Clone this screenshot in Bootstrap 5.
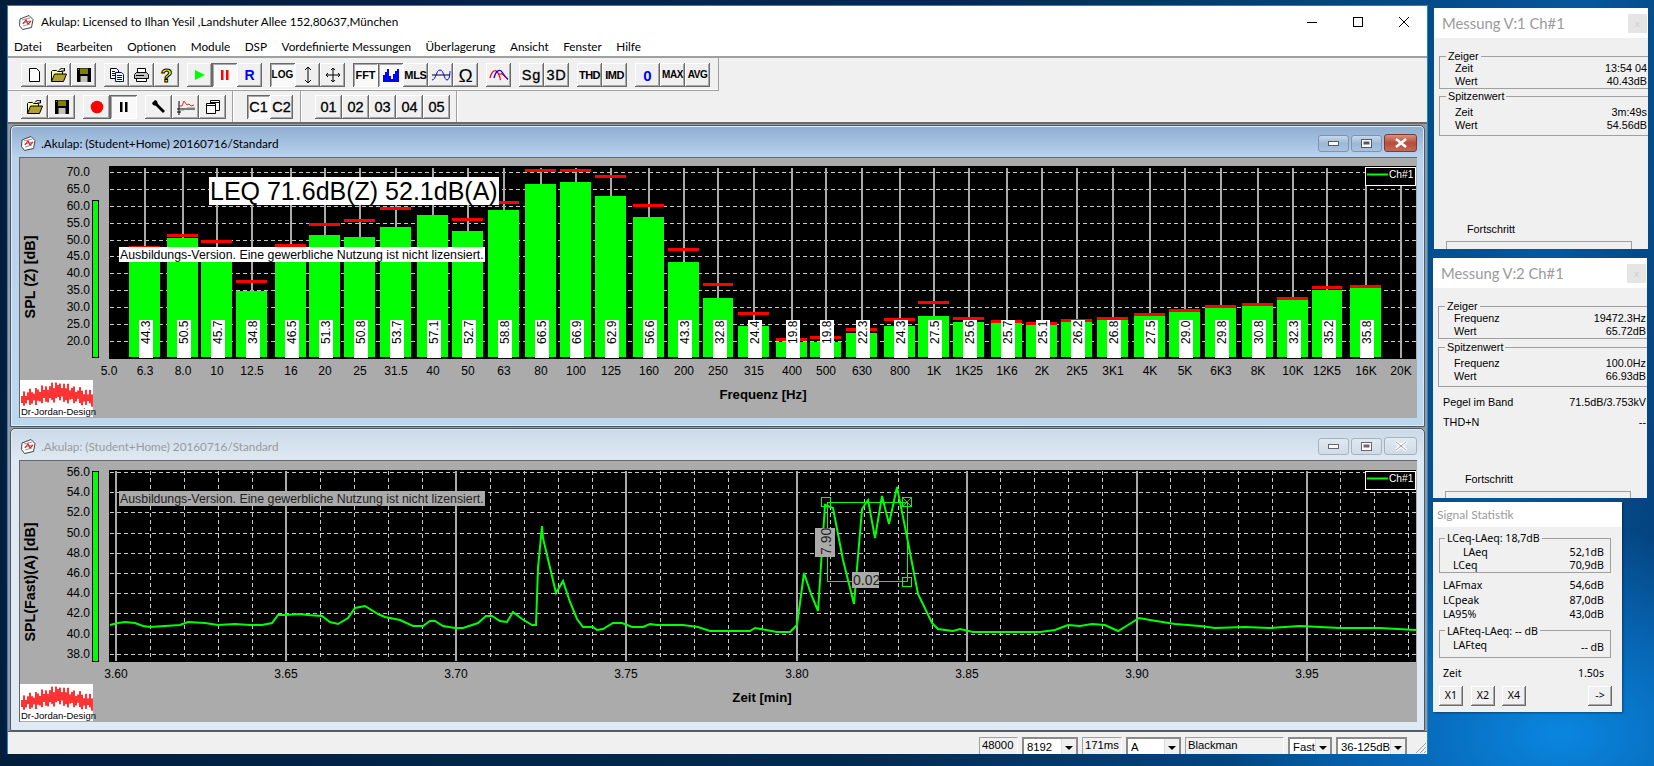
<!DOCTYPE html>
<html lang="de">
<head>
<meta charset="utf-8">
<title>Akulap</title>
<link href="https://cdn.jsdelivr.net/npm/bootstrap@5.3.0/dist/css/bootstrap.min.css" rel="stylesheet">
<style>
html,body{width:1654px;height:766px;overflow:hidden;margin:0}
body{font-family:"Liberation Sans",Arial,sans-serif;color:#000;background:radial-gradient(ellipse 330px 210px at 1560px 735px,#0a86df 0%,#0769b8 45%,rgba(5,80,150,0) 100%),linear-gradient(98deg,#011d3a 0%,#022a52 55%,#05579c 90%,#043f78 100%)}
.desk{width:1654px;height:766px}
.win-main{left:7px;top:5px;width:1421px;height:749px;background:#f0f0f0;border:1px solid #1a86cc;border-bottom:0}
.sys{font-family:"Lato","Noto Sans",sans-serif}
.titlebar{height:32px;background:#fff;padding-left:10px;font-size:11.75px}
.titlebar .ttl{margin-left:6px}
.wc{width:46px;height:32px;margin-top:0}
.menubar{height:18px;background:#fff;font-size:11.75px;line-height:18px;padding-left:6px;gap:14.5px}
.sep2{height:2px;background:#a0a0a0}
.tbrow1{height:33px;padding:5px 0 0 13px;gap:8px;position:relative}
.band1{width:711px;height:33px;margin:-5px 0 0 -13px;padding:5px 0 0 13px;border-right:1px solid #a0a0a0;border-bottom:1px solid #a0a0a0;box-shadow:inset 0 -1px #fff}
.tbrow2{height:31px}
.bnd{height:31px;padding-top:4px;border-right:1px solid #a0a0a0;box-shadow:1px 0 #fff}
.btn.tb{width:25px;height:24px;padding:0;border:0;border-radius:0;background:#f0f0f0;color:#000;flex:none;box-shadow:inset -1px -1px #6a6a6a,inset 1px 1px #fff,inset -2px -2px #a8a8a8;font-size:14px;line-height:1}
.btn.tb.on{background:#f9f9f9;box-shadow:inset 1px 1px #6a6a6a,inset -1px -1px #fff,inset 2px 2px #a8a8a8}
.tb2{width:27px!important}
.tbc{width:23px!important}
.mono{font-weight:700;font-size:10px!important;letter-spacing:.1px}
.pix{font-weight:700;font-size:11px!important}
.wide{font-size:14.5px!important;letter-spacing:.8px;-webkit-text-stroke:.3px #000}
.mdi{height:607px;padding:1px 2px 0 2px;background:#9a9a9a;gap:1px;border-top:2px solid #6a6a6a;box-sizing:content-box;margin-top:0}
.child{border:1px solid #4d5a68;border-radius:5px 5px 0 0;padding:0 7px 8px 8px;box-shadow:inset 0 0 0 1px #dce9f6}
.child.active{background:linear-gradient(#8fadd0 0,#b9d3ef 31px,#bcd7f0 100%)}
.child.idle{background:linear-gradient(#cbdae8 0,#dfe9f3 31px,#dfeaf5 100%)}
.ctitle{height:31px;font-size:11.75px;padding:3px 0 0 1px}
.ctitle>span{padding-top:2px}
.child.idle .ctitle span{color:#9a9a9a}
.cb{width:31px;height:17px;margin-left:2px;border:1px solid #7f93ab;border-radius:3px;background:linear-gradient(#c7d8ea,#9db8d6 50%,#a9c3df)}
.child.idle .cb{border-color:#a7b2bd;background:linear-gradient(#e1e9f1,#cfdbe7)}
.cb.x{width:33px;height:18px;background:linear-gradient(#d7907f,#b84c38 50%,#c26a58);border-color:#7d3a30}
.child.idle .cb.x{width:33px;background:linear-gradient(#e1e9f1,#cfdbe7);border-color:#a7b2bd}
.client{background:#ababab;display:block}
svg text{font-family:"Liberation Sans",Arial,sans-serif}
.statusbar{height:23px;border-top:1px solid #5c5c5c;padding:5px 20px 0 0;gap:4px;overflow:hidden;font-size:11.3px;position:relative}
.fld{height:17px;border:1px solid #a0a0a0;border-right-color:#fff;border-bottom:0;padding:1px 1px 0 2px;line-height:13px;flex:none;background:#f0f0f0}
.cmb{height:17px;flex:none;border:2px solid #8a8a8a;border-bottom:0;background:#fff;padding:2px 0 0 3px;position:relative;line-height:13px}
.cmb::after{content:"";position:absolute;right:0;top:0;width:15px;height:100%;background:#f0f0f0;border-left:1px solid #ddd}
.cmb::before{content:"";position:absolute;z-index:1;right:3px;top:7px;border:4px solid transparent;border-top:4px solid #000;border-bottom:0}
.sgrip{right:0;bottom:0}
.pan{background:#f0f0f0;overflow:hidden;font-size:10.8px;line-height:13px}
.pan1{left:1434px;top:8px;width:214px;height:241px}
.pan2{left:1433px;top:258px;width:214px;height:240px}
.pan3{left:1433px;top:502px;width:189px;height:210px;font-family:"Noto Sans",sans-serif;font-size:10.6px;box-shadow:1px 1px 2px rgba(0,0,0,.4)}
.ptitle{height:30px;background:#fff;color:#9a9a9a;font-size:14.8px;padding-left:8px;font-family:"Lato","Noto Sans",sans-serif}
.pan3 .ptitle{height:25px;padding-left:4px;font-size:12px}
.pclose{width:19px;height:19px;background:#e5e5e5;color:#cfcfcf;margin:0 1px 0 0;font-size:10px;line-height:19px;text-align:center}
.pbody{padding-left:5px;margin-right:-4px;height:calc(100% - 30px)}
.gb{border:1px solid #a0a0a0;margin:0;padding:0 4px 0 0;min-width:0}
.gb legend{float:none;width:auto;font-size:inherit;line-height:12px;margin:0 0 0 6px;padding:0 2px}
.gb .r{padding-left:15px}
.g2{margin-top:1px;padding-bottom:3px}
.g2 legend{margin-bottom:3.5px}
.prog{margin:5px 0 0 7px;width:186px;border:1px solid #a0a0a0;border-bottom:0;flex:none}
.pb3{padding:0 0 0 6px;height:185px;margin:0}
.pb3 .gb{width:172px;padding:0 6px 0 0}
.pb3 .gb legend{margin-left:5px}
.pb3 .gb .r{padding-left:13px}
.pb3 .ln{padding:0 7px 0 4px;width:172px}
.xb.btn{height:20px;width:24px;padding:0;border:0;border-radius:0;font-size:inherit;background:#f0f0f0;color:#000;box-shadow:inset -1px -1px #6a6a6a,inset 1px 1px #fff,inset -2px -2px #a8a8a8;flex:none}
</style>
</head>
<body>
<div class="desk position-relative">

<!-- Main window -->
<div class="win-main position-absolute d-flex flex-column">
  <div class="titlebar sys d-flex align-items-center">
    <svg width="17" height="17" viewBox="0 0 17 17"><use href="#appicon"/></svg>
    <span class="ttl">Akulap: Licensed to Ilhan Yesil ,Landshuter Allee 152,80637,München</span>
    <div class="ms-auto d-flex">
      <div class="wc d-flex align-items-center justify-content-center"><svg width="12" height="12"><path d="M1 6.5h10" stroke="#000"/></svg></div>
      <div class="wc d-flex align-items-center justify-content-center"><svg width="12" height="12"><rect x="1.5" y="1.5" width="9" height="9" fill="none" stroke="#000"/></svg></div>
      <div class="wc d-flex align-items-center justify-content-center"><svg width="12" height="12"><path d="M1 1l10 10M11 1L1 11" stroke="#000"/></svg></div>
    </div>
  </div>
  <div class="menubar sys d-flex">
    <span>Datei</span><span>Bearbeiten</span><span>Optionen</span><span>Module</span><span>DSP</span><span>Vordefinierte Messungen</span><span>Überlagerung</span><span>Ansicht</span><span>Fenster</span><span>Hilfe</span>
  </div>
  <div class="sep2"></div>

  <div class="d-flex tbrow1">
    <div class="band1 d-flex" style="gap:8px">
      <div class="d-flex"><button class="btn tb d-flex align-items-center justify-content-center"><svg width="16" height="16"><path d="M3.5 1.5h7l3 3v10h-10z" fill="#fff" stroke="#000"/></svg></button><button class="btn tb d-flex align-items-center justify-content-center"><svg width="18" height="16"><use href="#open"/></svg></button><button class="btn tb d-flex align-items-center justify-content-center"><svg width="16" height="16"><use href="#save"/></svg></button></div>
      <div class="d-flex"><button class="btn tb d-flex align-items-center justify-content-center"><svg width="16" height="16"><path d="M1.5 1.5h6l2 2v8h-8z" fill="#fff" stroke="#000"/><path d="M6.5 5.5h6l2 2v7h-8z" fill="#fff" stroke="#00a"/><path d="M8 8.5h5M8 10.5h5M8 12.5h5M3 4.5h3M3 6.5h3M3 8.5h3" stroke="#00a"/></svg></button><button class="btn tb d-flex align-items-center justify-content-center"><svg width="17" height="16"><path d="M4.5 1.5h8v5h-8z" fill="#fff" stroke="#000"/><path d="M1.5 7.5l2-2h10l2 2v4h-14z" fill="#c0c0c0" stroke="#000"/><path d="M3.5 11.5h10v3h-10z" fill="#fff" stroke="#000"/><path d="M3 8.5h8" stroke="#000"/></svg></button><button class="btn tb d-flex align-items-center justify-content-center"><span style="color:#ff0;font-weight:700;font-size:19px;-webkit-text-stroke:1px #000">?</span></button></div>
      <div class="d-flex"><button class="btn tb d-flex align-items-center justify-content-center"><svg width="12" height="12"><path d="M1 1l10 5-10 5z" fill="#0f0"/></svg></button><button class="btn tb on d-flex align-items-center justify-content-center"><svg width="8" height="10"><path d="M0 0h2.5v10H0zM5 0h2.5v10H5z" fill="#f00"/></svg></button><button class="btn tb d-flex align-items-center justify-content-center"><span style="color:#00f;font-weight:700">R</span></button></div>
      <div class="d-flex"><button class="btn tb on mono d-flex align-items-center justify-content-center">LOG</button><button class="btn tb d-flex align-items-center justify-content-center"><svg width="12" height="18"><path d="M6 1v16M3 4l3-3 3 3M3 14l3 3 3-3" fill="none" stroke="#000"/></svg></button><button class="btn tb d-flex align-items-center justify-content-center"><svg width="18" height="18"><path d="M9 2v14M2 9h14M7 4l2-2 2 2M7 14l2 2 2-2M4 7L2 9l2 2M14 7l2 2-2 2" fill="none" stroke="#000"/></svg></button></div>
      <div class="d-flex"><button class="btn tb on pix d-flex align-items-center justify-content-center">FFT</button><button class="btn tb on d-flex align-items-center justify-content-center"><svg width="18" height="15"><path d="M1 14V7h2V4h2V1h2v7h2v3h2V6h2V3h2V1h2v13z" fill="#00f"/></svg></button><button class="btn tb pix d-flex align-items-center justify-content-center" style="letter-spacing:-.3px">MLS</button><button class="btn tb d-flex align-items-center justify-content-center"><svg width="20" height="14"><path d="M1 7h18" stroke="#000"/><path d="M1 12C5 12 5 2 9 2s4 10 7 10 3-9 3-9" fill="none" stroke="#00f"/></svg></button><button class="btn tb d-flex align-items-center justify-content-center" style="font-size:19px">Ω</button></div>
      <button class="btn tb d-flex align-items-center justify-content-center"><svg width="20" height="14"><path d="M1 10C3 2 7 1 9 5s3 6 2 7" fill="none" stroke="#f00" stroke-width="1.3"/><path d="M5 10C7 2 11 1 13 4s4 6 6 7" fill="none" stroke="#00f" stroke-width="1.3"/><path d="M9 6h5M12 5l7 7" stroke="#f00"/></svg></button>
      <div class="d-flex"><button class="btn tb wide d-flex align-items-center justify-content-center">Sg</button><button class="btn tb wide d-flex align-items-center justify-content-center">3D</button></div>
      <div class="d-flex"><button class="btn tb pix d-flex align-items-center justify-content-center" style="letter-spacing:-.5px">THD</button><button class="btn tb pix d-flex align-items-center justify-content-center" style="letter-spacing:-.5px">IMD</button></div>
      <div class="d-flex"><button class="btn tb d-flex align-items-center justify-content-center"><span style="color:#00f;font-weight:700;font-size:15px">0</span></button><button class="btn tb mono d-flex align-items-center justify-content-center" style="letter-spacing:-.4px">MAX</button><button class="btn tb mono d-flex align-items-center justify-content-center" style="letter-spacing:-.4px">AVG</button></div>
    </div>
  </div>

  <div class="tbrow2 d-flex">
    <div class="bnd d-flex" style="width:225px;padding-left:13px;gap:8px">
      <div class="d-flex"><button class="btn tb tb2 d-flex align-items-center justify-content-center"><svg width="18" height="16"><use href="#open"/></svg></button><button class="btn tb tb2 d-flex align-items-center justify-content-center"><svg width="16" height="16"><use href="#save"/></svg></button></div>
      <div class="d-flex"><button class="btn tb tb2 d-flex align-items-center justify-content-center"><svg width="14" height="14"><circle cx="7" cy="7" r="6.3" fill="#f00"/></svg></button><button class="btn tb tb2 on d-flex align-items-center justify-content-center"><svg width="8" height="10"><path d="M0 0h2.5v10H0zM5 0h2.5v10H5z" fill="#000"/></svg></button></div>
      <div class="d-flex"><button class="btn tb tb2 d-flex align-items-center justify-content-center"><svg width="16" height="16"><path d="M1 4l3-3 2 1 1 3 7 7-2 2-7-7-3-1z" fill="#000"/></svg></button><button class="btn tb tb2 d-flex align-items-center justify-content-center"><svg width="20" height="17"><path d="M3 2v14M1 10h18M1 13h4" stroke="#000"/><path d="M3 7h3l2-5 3 4 2-1 2 2 3-1" fill="none" stroke="#c33"/><path d="M3 11h5l3-2h8" fill="none" stroke="#888"/></svg></button><button class="btn tb tb2 d-flex align-items-center justify-content-center"><svg width="16" height="16"><path d="M5.5 1.5h9v10h-9z" fill="#fff" stroke="#000"/><path d="M5.5 3.5h9" stroke="#000"/><path d="M1.5 4.5h9v10h-9z" fill="#fff" stroke="#000"/><path d="M1.5 6.5h9" stroke="#000"/></svg></button></div>
    </div>
    <div class="bnd d-flex" style="width:68px;padding-left:14px">
      <button class="btn tb tbc on wide d-flex align-items-center justify-content-center" style="letter-spacing:0">C1</button><button class="btn tb tbc wide d-flex align-items-center justify-content-center" style="letter-spacing:0">C2</button>
    </div>
    <div class="bnd d-flex" style="width:156px;padding-left:14px">
      <button class="btn tb tb2 wide d-flex align-items-center justify-content-center" style="letter-spacing:0">01</button><button class="btn tb tb2 wide d-flex align-items-center justify-content-center" style="letter-spacing:0">02</button><button class="btn tb tb2 wide d-flex align-items-center justify-content-center" style="letter-spacing:0">03</button><button class="btn tb tb2 wide d-flex align-items-center justify-content-center" style="letter-spacing:0">04</button><button class="btn tb tb2 wide d-flex align-items-center justify-content-center" style="letter-spacing:0">05</button>
    </div>
  </div>

  <div class="mdi d-flex flex-column">
    <div class="child active">
      <div class="ctitle sys d-flex align-items-center">
        <svg width="17" height="17" viewBox="0 0 17 17"><use href="#appicon"/></svg>
        <span class="ms-1">.Akulap: (Student+Home) 20160716/Standard</span>
        <div class="ms-auto d-flex align-items-center">
          <div class="cb d-flex align-items-center justify-content-center"><svg width="11" height="6"><rect x=".5" y="1.5" width="10" height="4" fill="#fff" stroke="#4a5a70"/></svg></div>
          <div class="cb d-flex align-items-center justify-content-center"><svg width="11" height="9"><rect x=".5" y=".5" width="10" height="8" fill="#fff" stroke="#4a5a70"/><rect x="2.5" y="2.5" width="6" height="3" fill="#4a5a70"/></svg></div>
          <div class="cb x d-flex align-items-center justify-content-center"><svg width="14" height="10"><path d="M2 1l10 8M12 1L2 9" stroke="#fff" stroke-width="2.6"/></svg></div>
        </div>
      </div>
      <svg id="plot1" class="client" width="1398" height="261" viewBox="19 157 1398 261"></svg>
    </div>
    <div class="child idle">
      <div class="ctitle sys d-flex align-items-center">
        <svg width="17" height="17" viewBox="0 0 17 17"><use href="#appicon"/></svg>
        <span class="ms-1">.Akulap: (Student+Home) 20160716/Standard</span>
        <div class="ms-auto d-flex align-items-center">
          <div class="cb d-flex align-items-center justify-content-center"><svg width="11" height="6"><rect x=".5" y="1.5" width="10" height="4" fill="#fff" stroke="#667"/></svg></div>
          <div class="cb d-flex align-items-center justify-content-center"><svg width="11" height="9"><rect x=".5" y=".5" width="10" height="8" fill="#fff" stroke="#667"/><rect x="2.5" y="2.5" width="6" height="3" fill="#667"/></svg></div>
          <div class="cb x d-flex align-items-center justify-content-center"><svg width="14" height="10"><path d="M2 1l10 8M12 1L2 9" stroke="#fff" stroke-width="3.4"/><path d="M2 1l10 8M12 1L2 9" stroke="#889" stroke-width=".8"/></svg></div>
        </div>
      </div>
      <svg id="plot2" class="client" width="1398" height="262" viewBox="19 460 1398 262"></svg>
    </div>
  </div>

  <div class="statusbar d-flex justify-content-end">
    <div class="fld" style="width:39px">48000</div>
    <div class="cmb" style="width:56px">8192</div>
    <div class="fld" style="width:40px">171ms</div>
    <div class="cmb" style="width:55px">A</div>
    <div class="fld" style="width:99px">Blackman</div>
    <div class="cmb" style="width:44px">Fast</div>
    <div class="cmb" style="width:71px">36-125dB</div>
    <svg class="sgrip position-absolute" width="12" height="12"><path d="M11 1L1 11M11 5l-6 6M11 9l-2 2" stroke="#a0a0a0"/></svg>
  </div>
</div>

<!-- Messung V:1 -->
<div class="pan pan1 position-absolute">
  <div class="ptitle d-flex align-items-center justify-content-between"><span>Messung V:1 Ch#1</span><span class="pclose">x</span></div>
  <div class="pbody d-flex flex-column">
    <fieldset class="gb" style="margin-top:12px">
      <legend>Zeiger</legend>
      <div class="r d-flex justify-content-between"><span>Zeit</span><span>13:54 04</span></div>
      <div class="r d-flex justify-content-between"><span>Wert</span><span>40.43dB</span></div>
    </fieldset>
    <fieldset class="gb g2">
      <legend>Spitzenwert</legend>
      <div class="r d-flex justify-content-between"><span>Zeit</span><span>3m:49s</span></div>
      <div class="r d-flex justify-content-between"><span>Wert</span><span>54.56dB</span></div>
    </fieldset>
    <div class="mt-auto" style="padding-left:28px">Fortschritt</div>
    <div class="prog" style="height:8px"></div>
  </div>
</div>

<!-- Messung V:2 -->
<div class="pan pan2 position-absolute">
  <div class="ptitle d-flex align-items-center justify-content-between"><span>Messung V:2 Ch#1</span><span class="pclose">x</span></div>
  <div class="pbody d-flex flex-column">
    <fieldset class="gb" style="margin-top:12px">
      <legend>Zeiger</legend>
      <div class="r d-flex justify-content-between"><span>Frequenz</span><span>19472.3Hz</span></div>
      <div class="r d-flex justify-content-between"><span>Wert</span><span>65.72dB</span></div>
    </fieldset>
    <fieldset class="gb g2" style="margin-top:2px">
      <legend>Spitzenwert</legend>
      <div class="r d-flex justify-content-between"><span>Frequenz</span><span>100.0Hz</span></div>
      <div class="r d-flex justify-content-between"><span>Wert</span><span>66.93dB</span></div>
    </fieldset>
    <div class="d-flex justify-content-between" style="margin-top:9.5px;padding:0 5px 0 5px"><span>Pegel im Band</span><span>71.5dB/3.753kV</span></div>
    <div class="d-flex justify-content-between" style="margin-top:7px;padding:0 5px 0 5px"><span>THD+N</span><span>--</span></div>
    <div class="mt-auto" style="padding-left:27px">Fortschritt</div>
    <div class="prog" style="height:7px"></div>
  </div>
</div>

<!-- Signal Statistik -->
<div class="pan pan3 position-absolute">
  <div class="ptitle d-flex align-items-center"><span>Signal Statistik</span></div>
  <div class="pb3 d-flex flex-column">
    <fieldset class="gb" style="margin-top:5px">
      <legend>LCeq-LAeq: 18,7dB</legend>
      <div class="r d-flex justify-content-between" style="padding-top:1.5px"><span style="padding-left:10px">LAeq</span><span>52,1dB</span></div>
      <div class="r d-flex justify-content-between"><span>LCeq</span><span>70,9dB</span></div>
    </fieldset>
    <div class="ln d-flex justify-content-between" style="margin-top:6.5px"><span>LAFmax</span><span>54,6dB</span></div>
    <div class="ln d-flex justify-content-between" style="margin-top:2px"><span>LCpeak</span><span>87,0dB</span></div>
    <div class="ln d-flex justify-content-between" style="margin-top:1px"><span>LA95%</span><span>43,0dB</span></div>
    <fieldset class="gb" style="margin-top:3.5px;padding-bottom:3px">
      <legend>LAFteq-LAeq: -- dB</legend>
      <div class="r d-flex justify-content-between" style="padding-top:2px"><span>LAFteq</span><span style="margin-top:2px">-- dB</span></div>
    </fieldset>
    <div class="ln d-flex justify-content-between" style="margin-top:9.5px"><span>Zeit</span><span>1.50s</span></div>
    <div class="d-flex" style="margin-top:5.5px;width:173px">
      <button class="btn xb">X1</button><button class="btn xb" style="margin-left:8px">X2</button><button class="btn xb" style="margin-left:7px">X4</button><button class="btn xb ms-auto">-&gt;</button>
    </div>
  </div>
</div>
</div>

<svg width="0" height="0" class="position-absolute">
  <defs>
    <g id="appicon"><path d="M2 5l9-3.5 4 4-1.5 8-9 2-3-4z" fill="#fff" stroke="#444"/><path d="M4 6l8-2M4.5 9l8-2M5 12l7-2" stroke="#999"/><path d="M5 10l3-4 2 4 3-3" fill="none" stroke="#d22" stroke-width="1.2"/></g>
    <g id="open"><path d="M1.5 14.500V4.500l1-1h4l1 1h5v2.500" fill="#ffff99" stroke="#000"/><path d="M1.500 14.500l3-7.500h12l-3 7.500z" fill="#b0a030" stroke="#000"/><path d="M9 3.500c1-2 3-2.500 5-1.500M14.500 1v3h-3" fill="none" stroke="#000"/></g>
    <g id="save"><path d="M1 1h14v14H1z" fill="#000"/><rect x="4" y="1.500" width="8" height="5.500" fill="#808000"/><rect x="4.500" y="9" width="7" height="6" fill="#c0c0c0"/><rect x="2" y="2" width="1" height="1" fill="#808000"/></g>
  </defs>
</svg>

<script>
function logo(y){
  var n1=[2,-2,3,0,-3,1,3,-2,0,3,-3,2,-1,3,0,-3,3,-2,1,-1,3,-2,2,-3,3,0,-2,3,1,-3,0,3,-2,2,-3,1];
  var n2=[-1,2,0,-3,2,1,-2,3,-1,0,2,-3,1,2,-2,0,3,-1,-2,1,-3,2,0,3,-1,-2,2,0,-3,1,3,-1,2,-2,0,3];
  var s='<rect x="20" y="'+y+'" width="73" height="37" fill="#fff"/>';
  for(var i=0;i<36;i++){
    var d=Math.abs(i-18)/18;
    var t=y+4+d*10+n1[i];
    var b=y+19+d*5+n2[i];
    s+='<rect x="'+(21+i*2)+'" y="'+t+'" width="2" height="'+(b-t)+'" fill="#ff3333"/>';
  }
  s+='<text x="21" y="'+(y+35)+'" font-size="9.500">Dr-Jordan-Design</text>';
  return s;
}
function hgrid(x1,x2,ys){var s='';ys.forEach(function(y){s+='<path d="M'+x1+' '+y+'.5H'+x2+'" stroke="#c8c8c8" stroke-dasharray="4 3"/>';});return s;}
function legend(y){return '<rect x="1365.500" y="'+(y+.5)+'" width="50" height="18" fill="#000" stroke="#fff"/><path d="M1367 '+(y+7.500)+'h21" stroke="#0f0" stroke-width="2"/><text x="1389" y="'+(y+11)+'" fill="#fff" font-size="10.200">Ch#1</text>';}
var edge=function(y){return '<path d="M19.500 '+y+'V722M19 '+(y+.5)+'H1417" stroke="#666" fill="none"/>';};

/* Plot 1 */
var bars=[
['6.3',145,129,31,259,246,'44.3'],['8.0',183,167,31,238,234,'50.5'],['10',217,201,31,254,240,'45.7'],['12.5',252,236,31,291,280,'34.8'],
['16',291,275,31,251,244,'46.5'],['20',325,309,31,235,223,'51.3'],['25',360,344,31,237,219,'50.8'],['31.5',396,380,31,227,207,'53.7'],
['40',433,417,31,215,202,'57.1'],['50',468,452,31,231,218,'52.7'],['63',504,488,31,210,201,'58.8'],['80',541,525,31,184,169,'66.5'],
['100',576,560,31,182,169,'66.9'],['125',611,595,31,196,175,'62.9'],['160',649,633,31,217,204,'56.6'],['200',684,668,31,262,248,'43.3'],
['250',718,703,30,298,283,'32.8'],['315',754,738,31,326,312,'24.4'],['400',792,776,31,342,338,'19.8'],['500',826,810,31,342,336,'19.8'],
['630',862,846,31,333,328,'22.3'],['800',900,884,31,326,318,'24.3'],['1K',934,918,31,316,301,'27.5'],['1K25',969,953,31,322,317,'25.6'],
['1K6',1007,991,31,323,320,'25.7'],['2K',1042,1026,31,325,322,'25.1'],['2K5',1077,1061,31,322,319,'26.2'],['3K1',1113,1097,31,320,317,'26.8'],
['4K',1150,1134,31,316,313,'27.5'],['5K',1185,1169,31,312,309,'29.0'],['6K3',1221,1205,31,308,305,'29.8'],['8K',1258,1242,31,306,303,'30.8'],
['10K',1293,1277,31,300,297,'32.3'],['12K5',1327,1312,30,290,286,'35.2'],['16K',1366,1350,31,288,285,'35.8']];
var p=edge(157)+'<rect x="109" y="166" width="1307" height="193" fill="#000"/>';
var ylab=[[70,172],[65,189],[60,206],[55,223],[50,240],[45,256],[40,273],[35,290],[30,307],[25,324],[20,341]];
p+=hgrid(110,1416,ylab.map(function(a){return a[1];}));
bars.forEach(function(b){p+='<rect x="'+(b[1]-1)+'" y="168" width="2" height="190" fill="#aaa"/>';});
p+='<rect x="1400" y="168" width="2" height="190" fill="#aaa"/>';
bars.forEach(function(b){
  p+='<rect x="'+b[2]+'" y="'+b[4]+'" width="'+b[3]+'" height="'+(357-b[4])+'" fill="#0f0"/>';
  p+='<rect x="'+b[2]+'" y="'+b[5]+'" width="'+b[3]+'" height="3" fill="#f00"/>';
  p+='<rect x="'+(b[2]+10)+'" y="320" width="14" height="38" fill="#fff"/>';
  p+='<text transform="translate('+(b[2]+21)+' 344) rotate(-90)" font-size="12">'+b[6]+'</text>';
});
ylab.forEach(function(a){p+='<text x="90" y="'+(a[1]+4)+'" text-anchor="end" font-size="12">'+a[0].toFixed(1)+'</text>';});
p+='<rect x="92.500" y="200.500" width="6" height="157" fill="#0f0" stroke="#000"/>';
p+='<text x="109" y="375" text-anchor="middle" font-size="12">5.0</text>';
bars.forEach(function(b){p+='<text x="'+b[1]+'" y="375" text-anchor="middle" font-size="12">'+b[0]+'</text>';});
p+='<text x="1401" y="375" text-anchor="middle" font-size="12">20K</text>';
p+='<text x="763" y="399" text-anchor="middle" font-size="13.200" font-weight="700">Frequenz [Hz]</text>';
p+='<text transform="translate(35 277) rotate(-90)" text-anchor="middle" font-size="14.400" font-weight="700">SPL (Z) [dB]</text>';
p+='<rect x="209" y="177" width="290" height="28" fill="#fff"/><text x="210" y="200" font-size="25">LEQ 71.6dB(Z) 52.1dB(A)</text>';
p+='<rect x="119" y="247" width="366" height="15" fill="#fff"/><text x="120" y="259" font-size="12.350">Ausbildungs-Version. Eine gewerbliche Nutzung ist nicht lizensiert.</text>';
p+=legend(167)+logo(380);
document.getElementById('plot1').innerHTML=p;

/* Plot 2 */
var q=edge(460)+'<rect x="109" y="470" width="1307" height="192" fill="#000"/>';
var yl2=[[56,472],[54,492],[52,512],[50,533],[48,553],[46,573],[44,593],[42,613],[40,634],[38,654]];
q+=hgrid(110,1416,yl2.map(function(a){return a[1];}));
for(var x=116;x<1416;x+=34){var maj=Math.abs((x-116)%170)<1;
  if(!maj)q+='<path d="M'+(x+.5)+' 471V660" stroke="#c8c8c8" stroke-dasharray="4 3"/>';}
['3.60','3.65','3.70','3.75','3.80','3.85','3.90','3.95'].forEach(function(t,i){var x=[116,286,456,626,797,967,1137,1307][i];
  q+='<rect x="'+(x-1)+'" y="471" width="2" height="190" fill="#aaa"/>';
  q+='<text x="'+x+'" y="678" text-anchor="middle" font-size="12">'+t+'</text>';});
yl2.forEach(function(a){q+='<text x="90" y="'+(a[1]+4)+'" text-anchor="end" font-size="12">'+a[0].toFixed(1)+'</text>';});
q+='<rect x="92.500" y="471.500" width="6" height="190" fill="#0f0" stroke="#000"/>';
var curve=[[110,625],[118,623],[125,622],[135,623],[143,626],[150,627],[165,626],[180,625],[188,622],[205,623],[218,625],[235,624],[250,625],[262,625],[272,623],[278,615],[285,615],[300,614],[308,615],[322,616],[330,622],[338,624],[348,618],[355,608],[365,606],[378,614],[385,617],[400,620],[413,626],[423,626],[430,621],[435,621],[443,626],[455,628],[463,628],[478,623],[486,616],[492,616],[500,621],[507,622],[513,612],[522,619],[532,625],[536,625],[538,568],[542,526],[543,538],[556,593],[563,581],[570,602],[577,619],[583,627],[593,627],[597,630],[603,629],[613,623],[622,623],[632,627],[643,627],[650,624],[657,625],[683,625],[698,627],[710,631],[750,631],[755,628],[777,632],[790,632],[797,625],[804,573],[811,594],[818,611],[825,505],[833,508],[843,560],[854,604],[862,509],[868,500],[875,538],[882,496],[889,524],[897,487],[907,537],[918,594],[932,623],[938,629],[953,631],[960,629],[973,632],[1040,632],[1055,630],[1068,625],[1080,626],[1092,624],[1105,625],[1118,631],[1128,625],[1139,618],[1150,620],[1175,624],[1200,626],[1215,628],[1245,627],[1270,628],[1300,626],[1340,628],[1380,628],[1416,630]];
q+='<polyline fill="none" stroke="#0f0" stroke-width="2" points="'+curve.map(function(c){return c.join(',');}).join(' ')+'"/>';
q+='<g fill="none" stroke="#0f0" stroke-width="1"><rect x="827.500" y="502.500" width="80" height="79"/><rect x="821.500" y="497.500" width="9" height="9"/><rect x="902.500" y="497.500" width="9" height="9"/><rect x="902.500" y="577.500" width="9" height="9"/></g><path d="M903 498l8 8M911 498l-8 8" stroke="#6a6" stroke-width="1"/>';
q+='<rect x="815" y="528" width="20" height="29" fill="#aaa"/><text transform="translate(830.500 555) rotate(-90)" font-size="14" fill="#222">7.90</text>';
q+='<rect x="852" y="572" width="27" height="16" fill="#aaa"/><text x="853" y="585" font-size="14" fill="#222">0.02</text>';
q+='<text x="762" y="702" text-anchor="middle" font-size="13.200" font-weight="700">Zeit [min]</text>';
q+='<text transform="translate(35 582) rotate(-90)" text-anchor="middle" font-size="14.300" font-weight="700">SPL(Fast)(A) [dB]</text>';
q+='<rect x="119" y="491" width="366" height="15" fill="#aaa"/><text x="120" y="503" font-size="12.350" fill="#222">Ausbildungs-Version. Eine gewerbliche Nutzung ist nicht lizensiert.</text>';
q+=legend(471)+logo(684);
document.getElementById('plot2').innerHTML=q;
</script>
<script src="https://cdn.jsdelivr.net/npm/bootstrap@5.3.0/dist/js/bootstrap.bundle.min.js"></script>
</body>
</html>
